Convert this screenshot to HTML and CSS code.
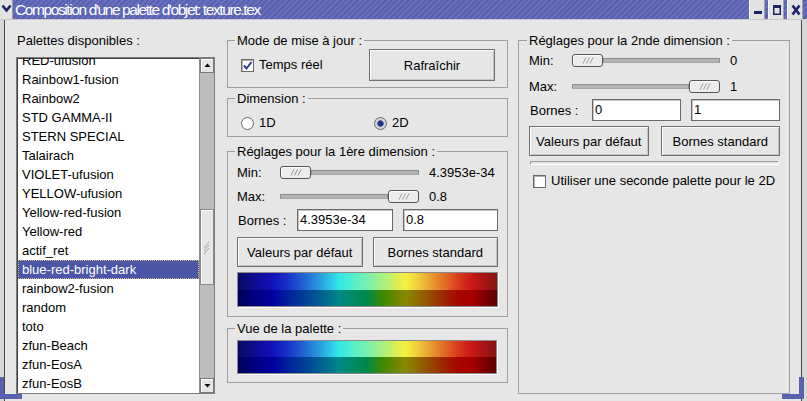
FILE: index.html
```html
<!DOCTYPE html>
<html lang="fr">
<head>
<meta charset="utf-8">
<title>Composition d'une palette d'objet</title>
<link rel="stylesheet" href="styles.css">
</head>
<body>
<div class="window">
  <div class="titlebar">
    <div class="tb-menu">
      <svg width="13" height="19" viewBox="0 0 13 19"><path d="M2.5 5.5 L6.5 10.5 L10.5 5.5" fill="none" stroke="#1c2266" stroke-width="2.6"/></svg>
    </div>
    <div class="tb-title">Composition d'une palette d'objet: texture.tex</div>
    <div class="tb-buttons">
      <div class="tb-btn"><svg width="16" height="19" viewBox="0 0 16 19"><rect x="4" y="11" width="8" height="3" fill="#1c2266"/></svg></div>
      <div class="tb-btn"><svg width="16" height="19" viewBox="0 0 16 19"><path d="M4 5 H12 V15 H4 Z M5.5 8 V13.5 H10.5 V8 Z" fill="#1c2266" fill-rule="evenodd"/></svg></div>
      <div class="tb-btn"><svg width="16" height="19" viewBox="0 0 16 19"><path d="M4.5 5.5 L11.5 14.5 M11.5 5.5 L4.5 14.5" stroke="#1c2266" stroke-width="2.6"/></svg></div>
    </div>
  </div>

  <div class="client">
    <div class="col-left">
      <div class="label">Palettes disponibles :</div>
      <div class="listbox">
        <div class="list-view">
          <ul class="items">
            <li>RED-ufusion</li>
            <li>Rainbow1-fusion</li>
            <li>Rainbow2</li>
            <li>STD GAMMA-II</li>
            <li>STERN SPECIAL</li>
            <li>Talairach</li>
            <li>VIOLET-ufusion</li>
            <li>YELLOW-ufusion</li>
            <li>Yellow-red-fusion</li>
            <li>Yellow-red</li>
            <li>actif_ret</li>
            <li class="selected">blue-red-bright-dark</li>
            <li>rainbow2-fusion</li>
            <li>random</li>
            <li>toto</li>
            <li>zfun-Beach</li>
            <li>zfun-EosA</li>
            <li>zfun-EosB</li>
          </ul>
        </div>
        <div class="scrollbar">
          <div class="sb-btn"><svg width="13" height="13" viewBox="0 0 13 13"><path d="M3.5 8 L6.5 4.5 L9.5 8 Z" fill="#000"/></svg></div>
          <div class="sb-trough">
            <div class="sb-thumb"><svg width="8" height="16" viewBox="0 0 8 16"><path d="M1 9 L6 3 M1 12 L6 6 M1 15 L6 9" stroke="#a8a8a8" stroke-width="1"/></svg></div>
          </div>
          <div class="sb-btn"><svg width="13" height="13" viewBox="0 0 13 13"><path d="M3.5 5 L6.5 8.5 L9.5 5 Z" fill="#000"/></svg></div>
        </div>
      </div>
    </div>

    <div class="col-mid">
      <fieldset class="group g-mode">
        <legend>Mode de mise à jour :</legend>
        <div class="gbody row">
          <span class="check"><svg width="11" height="11" viewBox="0 0 11 11"><path d="M2 5.5 L4.5 8.5 L9.5 2" fill="none" stroke="#2a3a9a" stroke-width="2"/></svg></span>
          <span class="opt-label">Temps réel</span>
          <button class="btn btn-refresh">Rafraîchir</button>
        </div>
      </fieldset>

      <fieldset class="group g-dim">
        <legend>Dimension :</legend>
        <div class="gbody row">
          <span class="radio-item"><span class="radio"></span><span class="opt-label">1D</span></span>
          <span class="radio-item"><span class="radio on"></span><span class="opt-label">2D</span></span>
        </div>
      </fieldset>

      <fieldset class="group g-dim1">
        <legend>Réglages pour la 1ère dimension :</legend>
        <div class="gbody stack">
          <div class="row slider-row">
            <span class="s-label">Min:</span>
            <div class="slider s1"><div class="handle"><svg width="12" height="7" viewBox="0 0 12 7"><path d="M1 6.5 L4 0.5 M4.5 6.5 L7.5 0.5 M8 6.5 L11 0.5" stroke="#9a9a9a"/></svg></div><div class="track"></div></div>
            <span class="s-value">4.3953e-34</span>
          </div>
          <div class="row slider-row r-max">
            <span class="s-label">Max:</span>
            <div class="slider s1"><div class="track"></div><div class="handle"><svg width="12" height="7" viewBox="0 0 12 7"><path d="M1 6.5 L4 0.5 M4.5 6.5 L7.5 0.5 M8 6.5 L11 0.5" stroke="#9a9a9a"/></svg></div></div>
            <span class="s-value">0.8</span>
          </div>
          <div class="row bornes-row">
            <span class="b-label b1">Bornes :</span>
            <span class="input in1a">4.3953e-34</span>
            <span class="input in1b">0.8</span>
          </div>
          <div class="row btn-row b-row1">
            <button class="btn">Valeurs par défaut</button>
            <button class="btn">Bornes standard</button>
          </div>
          <div class="cbar cbar1"><div class="cb-top"></div><div class="cb-bot"></div></div>
        </div>
      </fieldset>

      <fieldset class="group g-view">
        <legend>Vue de la palette :</legend>
        <div class="gbody">
          <div class="cbar cbar2"><div class="cb-top"></div><div class="cb-bot"></div></div>
        </div>
      </fieldset>
    </div>

    <fieldset class="group g-right">
      <legend>Réglages pour la 2nde dimension :</legend>
      <div class="gbody stack">
        <div class="row slider-row">
          <span class="s-label">Min:</span>
          <div class="slider s2"><div class="handle"><svg width="12" height="7" viewBox="0 0 12 7"><path d="M1 6.5 L4 0.5 M4.5 6.5 L7.5 0.5 M8 6.5 L11 0.5" stroke="#9a9a9a"/></svg></div><div class="track"></div></div>
          <span class="s-value">0</span>
        </div>
        <div class="row slider-row r-max2">
          <span class="s-label">Max:</span>
          <div class="slider s2"><div class="track"></div><div class="handle"><svg width="12" height="7" viewBox="0 0 12 7"><path d="M1 6.5 L4 0.5 M4.5 6.5 L7.5 0.5 M8 6.5 L11 0.5" stroke="#9a9a9a"/></svg></div></div>
          <span class="s-value">1</span>
        </div>
        <div class="row bornes-row">
          <span class="b-label b2">Bornes :</span>
          <span class="input in2">0</span>
          <span class="input in2">1</span>
        </div>
        <div class="row btn-row b-row2">
          <button class="btn">Valeurs par défaut</button>
          <button class="btn">Bornes standard</button>
        </div>
        <div class="separator"></div>
        <div class="row check-row">
          <span class="check"></span>
          <span class="opt-label">Utiliser une seconde palette pour le 2D</span>
        </div>
      </div>
    </fieldset>
  </div>

  <div class="corner bl"></div>
  <div class="corner br"></div>
</div>
</body>
</html>
```

FILE: styles.css
```css
* { box-sizing: border-box; }
html, body { margin: 0; padding: 0; }
body {
  width: 807px;
  height: 401px;
  overflow: hidden;
  font-family: "Liberation Sans", Arial, sans-serif;
  font-size: 13px;
  color: #000;
  background: #d8d8d8;
}
.window {
  position: relative;
  width: 807px;
  height: 401px;
  display: flex;
  flex-direction: column;
  background: #d8d8d8;
}

/* title bar */
.titlebar {
  height: 20px;
  flex: none;
  display: flex;
  border-bottom: 1px solid #c8c8c8;
  background: repeating-linear-gradient(135deg, #5860b0 0 2px, #6870bd 2px 4px);
}
.tb-menu {
  width: 13px;
  background: #e2e2e2;
  border-right: 1px solid #9a9a9a;
}
.tb-menu svg, .tb-btn svg { display: block; }
.tb-title {
  padding-left: 2px;
  color: #fff;
  font-family: "Liberation Sans Narrow", "Liberation Sans", Arial, sans-serif;
  font-size: 15.5px;
  letter-spacing: -1.4px;
  line-height: 20px;
  white-space: nowrap;
}
.tb-buttons {
  margin-left: auto;
  display: flex;
  gap: 3px;
  padding-right: 4px;
}
.tb-btn {
  width: 16px;
  background: #e2e2e2;
  border-left: 1px solid #f4f4f4;
  border-right: 1px solid #a0a0a0;
}

/* client area */
.client {
  flex: 1;
  margin: 0 5px 8px 4px;
  border: 1px solid #4a4a4a;
  border-top: none;
  background: #e6e6e6;
  padding: 13px 11px 9px 11px;
  display: flex;
  gap: 12px;
}
.col-left {
  width: 199px;
  flex: none;
  display: flex;
  flex-direction: column;
}
.label { line-height: 15px; padding-left: 1px; }
.listbox {
  margin-top: 9px;
  flex: 1;
  display: flex;
  border: 1px solid #7c7c7c;
  box-shadow: inset 1px 1px 0 #404040;
  background: #fff;
}
.list-view {
  flex: 1;
  overflow: hidden;
  padding-left: 1px;
  padding-top: 1px;
}
.items {
  list-style: none;
  margin: -8px 0 0 0;
  padding: 0;
}
.items li {
  height: 19px;
  line-height: 19px;
  padding-left: 4px;
  white-space: nowrap;
}
.items li.selected {
  background: #4b56a6;
  color: #fff;
  outline: 1px dotted #cdbf86;
  outline-offset: -1px;
}
.scrollbar {
  width: 15px;
  flex: none;
  display: flex;
  flex-direction: column;
  background: #bdbdbd;
  border-left: 1px solid #8a8a8a;
}
.sb-btn {
  height: 15px;
  flex: none;
  background: #e4e4e4;
  border: 1px solid #7a7a7a;
  box-shadow: inset 1px 1px 0 #fff;
}
.sb-btn svg { display: block; }
.sb-trough { flex: 1; }
.sb-thumb {
  margin-top: 136px;
  height: 76px;
  background: #e6e6e6;
  border: 1px solid #8a8a8a;
  box-shadow: inset 1px 1px 0 #fff;
  display: flex;
  align-items: center;
  justify-content: center;
}

/* group boxes */
.col-mid {
  width: 281px;
  flex: none;
  display: flex;
  flex-direction: column;
}
.group {
  margin: 0;
  padding: 0;
  min-width: 0;
  border: 1px solid #9e9e9e;
}
.group legend {
  margin-left: 7px;
  padding: 0 2px;
  line-height: 15px;
}
.row { display: flex; align-items: center; }
.stack { display: flex; flex-direction: column; }

.g-mode .gbody { padding: 1px 12px 6px 13px; height: 39px; }
.g-dim { margin-top: 3px; }
.g-dim .gbody { padding: 7px 0 3px 13px; height: 30px; }
.g-dim1 { margin-top: 7px; }
.g-dim1 .gbody { padding: 4px 9px 9px 9px; }
.g-view { margin-top: 4px; }
.g-view .gbody { padding: 4px 10px 8px 9px; }
.g-right { width: 272px; flex: none; margin-left: -2px; }
.g-right legend { margin-left: 8px; }
.g-right .gbody { padding: 3px 9px 0 10px; }

.check {
  width: 13px;
  height: 13px;
  flex: none;
  background: #fff;
  border: 1px solid #6a6a6a;
  box-shadow: inset 1px 1px 0 #b0b0b0;
}
.check svg { display: block; }
.opt-label { margin-left: 5px; line-height: 18px; }
.radio-item { display: flex; align-items: center; width: 133px; }
.radio {
  width: 13px;
  height: 13px;
  flex: none;
  border-radius: 50%;
  border: 1px solid #6a6a6a;
  background: #fff;
}
.radio.on {
  background: radial-gradient(circle at 50% 50%, #26328a 0 2.6px, #5a64a8 3px, #d4d4d8 3.6px);
}

.btn {
  font: inherit;
  color: #000;
  margin: 0;
  padding: 0;
  height: 30px;
  background: #e6e6e6;
  border: 1px solid #6e6e6e;
  box-shadow: inset 1px 1px 0 #fbfbfb, inset -1px -1px 0 #c4c4c4;
}
.btn-refresh { margin-left: auto; width: 126px; height: 32px; }

.slider-row { height: 18px; }
.s-label { width: 43px; flex: none; }
.slider { display: flex; align-items: center; height: 13px; flex: none; }
.slider.s1 { width: 139px; }
.slider.s2 { width: 148px; }
.slider .track {
  flex: 1;
  height: 5px;
  background: #b4b4b4;
  border: 1px solid #8e8e8e;
  border-bottom-color: #a6a6a6;
}
.slider .handle {
  width: 31px;
  height: 13px;
  flex: none;
  border: 1px solid #555;
  border-radius: 3px;
  background: #ececec;
  box-shadow: inset 1px 1px 0 #fff;
  display: flex;
  align-items: center;
  justify-content: center;
}
.slider .handle svg { display: block; }
.s-value { margin-left: 10px; white-space: nowrap; }
.r-max { margin-top: 6px; }
.r-max2 { margin-top: 8px; }

.bornes-row { height: 22px; margin-top: 4px; }
.b-label { flex: none; padding-left: 1px; }
.b1 { width: 60px; }
.b2 { width: 63px; }
.input {
  height: 22px;
  line-height: 20px;
  background: #fff;
  border: 1px solid #6a6a6a;
  box-shadow: inset 1px 1px 0 #c8c8c8;
  padding-left: 2px;
  white-space: nowrap;
  overflow: hidden;
}
.in1a { width: 96px; }
.in1b { width: 95px; margin-left: 10px; }
.in2 { width: 89px; }
.in2 + .in2 { margin-left: 10px; }

.btn-row { gap: 10px; margin-top: 6px; }
.btn-row .btn { flex: 1; }
.b-row2 { gap: 12px; margin-top: 5px; }

.cbar {
  display: flex;
  flex-direction: column;
  border: 1px solid #8a8a8a;
  box-shadow: 1px 1px 0 #fff;
}
.cbar1 { margin-top: 5px; height: 35px; }
.cbar2 { height: 34px; }
.cb-top, .cb-bot { flex: 1; }
.cb-top {
  background: linear-gradient(90deg,
    #0a0a60 0%, #0c0c8c 6%, #1010b8 13%, #1830c8 19%, #2060d0 25%, #2aa0e0 32%,
    #30e8e8 39%, #58f0c8 45%, #80f0a8 51%, #b0f07a 57%, #e0f050 62%, #f4f040 65%,
    #eec838 70%, #e89830 75%, #e06c24 80%, #d83c1c 85%, #cc1818 90%, #a81414 95%, #881414 100%);
}
.cb-bot {
  background: linear-gradient(90deg,
    #000058 0%, #00007c 6%, #0000a0 13%, #00209a 19%, #003c96 25%, #006090 32%,
    #008888 39%, #008a60 45%, #008848 50%, #3c8a00 56%, #6a8800 61%, #888800 65%,
    #906800 70%, #984400 75%, #9c2400 80%, #a40800 85%, #a80000 90%, #800000 95%, #600000 100%);
}

.separator {
  margin: 5px 1px 0 1px;
  height: 4px;
  border: 1px solid #9a9a9a;
  border-right-color: #fff;
  border-bottom-color: #fff;
}
.check-row { height: 18px; margin-top: 7px; padding-left: 4px; }

/* window frame corners */
.corner {
  position: absolute;
  bottom: 2px;
  width: 22px;
  height: 22px;
  border-bottom: 5px solid #5860b0;
}
.corner.bl { left: 0; border-left: 4px solid #5860b0; }
.corner.br { right: 3px; border-right: 5px solid #5860b0; }
```
